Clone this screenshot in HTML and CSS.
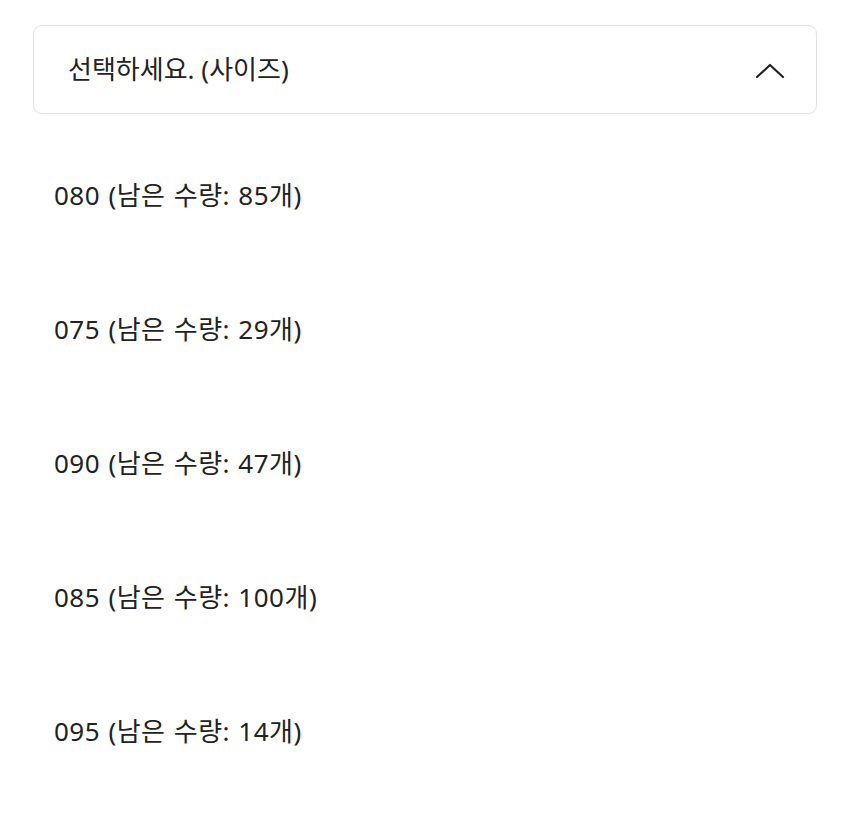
FILE: index.html
```html
<!DOCTYPE html>
<html lang="ko">
<head>
<meta charset="utf-8">
<link rel="stylesheet" href="styles.css">
</head>
<body>
<div class="picker">
  <div class="select-box">
    <span class="select-label">선택하세요. (사이즈)</span>
    <svg class="chevron" width="30" height="16" viewBox="0 0 30 16" aria-hidden="true">
      <polyline points="2,14 15,2 28,14" fill="none" stroke="#222" stroke-width="2.2" stroke-linecap="round" stroke-linejoin="round"/>
    </svg>
  </div>
  <ul class="options">
    <li class="option">080 (남은 수량: 85개)</li>
    <li class="option">075 (남은 수량: 29개)</li>
    <li class="option">090 (남은 수량: 47개)</li>
    <li class="option">085 (남은 수량: 100개)</li>
    <li class="option">095 (남은 수량: 14개)</li>
  </ul>
</div>
</body>
</html>
```
FILE: styles.css
```css
html, body {
  margin: 0;
  padding: 0;
  background: #fff;
}

body {
  font-family: "Noto Sans", "Noto Sans CJK KR", sans-serif;
  color: #222;
}

.picker {
  padding: 25px 33px 0 33px;
}

.select-box {
  height: 87px;
  border: 1px solid #e2e2e2;
  border-radius: 9px;
  display: flex;
  align-items: center;
  justify-content: space-between;
  padding: 0 31px 0 34px;
  box-shadow: 0 1px 2px rgba(0, 0, 0, 0.04);
}

.select-label {
  font-size: 26px;
  line-height: 1;
  margin-top: -2px;
}

.chevron {
  display: block;
  margin-top: 2px;
}

.options {
  list-style: none;
  margin: 13px 0 0 0;
  padding: 0;
}

.option {
  height: 134px;
  display: flex;
  align-items: center;
  padding-left: 21px;
  font-size: 26px;
  letter-spacing: 0.5px;
  word-spacing: 1px;
}
```
